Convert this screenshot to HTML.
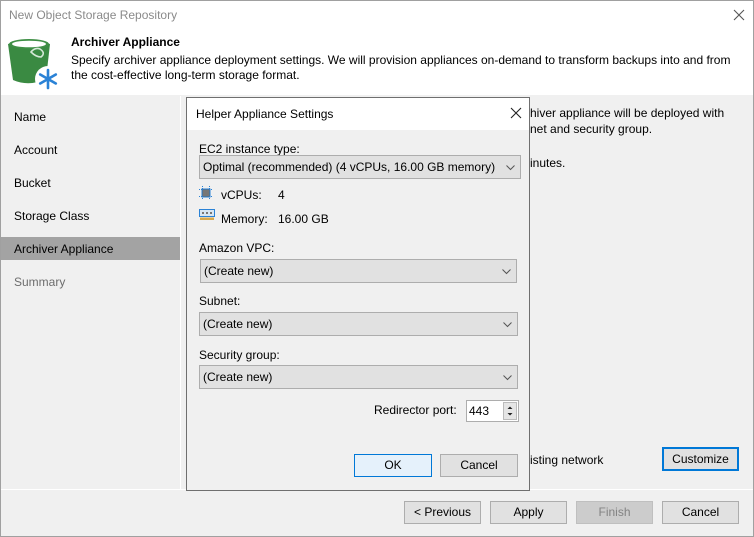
<!DOCTYPE html>
<html><head><meta charset="utf-8"><style>
*{box-sizing:border-box;margin:0;padding:0}
body{width:754px;height:537px;background:#f0f0f0;font-family:"Segoe UI","Liberation Sans",sans-serif;font-size:12px;color:#000;position:relative;overflow:hidden}
.abs{position:absolute}
.win{left:0;top:0;width:754px;height:537px;border:1px solid #a0a0a0;}
.hdr{left:1px;top:1px;width:752px;height:94px;background:#fff}
.t{white-space:nowrap}
.dd{position:absolute;background:#e1e1e1;border:1px solid #adadad;height:24px;padding:4px 0 0 3px}
.dd svg{position:absolute;right:5px;top:9px}
.btn{position:absolute;background:#e1e1e1;border:1px solid #adadad;height:23px;text-align:center;line-height:21px}
</style></head><body>
<div class="abs win"></div>
<div class="abs hdr"></div>
<div class="abs t" style="left:9px;top:8px;color:#8a8a8a;font-size:12px">New Object Storage Repository</div>
<svg class="abs" style="left:733px;top:9px" width="12" height="12"><path d="M1 1L11 11M11 1L1 11" stroke="#555" stroke-width="1.1"/></svg>
<svg class="abs" style="left:6px;top:35px" width="56" height="56" viewBox="0 0 56 56">
<path d="M2 9 Q23 2 44 9 L40 44 Q23 52 7 45Z" fill="#3a8a42"/>
<ellipse cx="23" cy="9" rx="20" ry="5" fill="#3f8f46"/>
<ellipse cx="23" cy="9" rx="17" ry="3.3" fill="#fff"/>
<path d="M25 17 Q29 12 34 14 Q40 18 35 22 Q30 22 25 17Z" fill="none" stroke="#d5e8d7" stroke-width="1.6"/>
<circle cx="42" cy="44" r="13" fill="#fff"/>
<g stroke="#2a82d6" stroke-width="2.6" stroke-linecap="round"><path d="M42 35V53M34.2 39.5L49.8 48.5M34.2 48.5L49.8 39.5"/></g>
</svg>
<div class="abs t" style="left:71px;top:35px;font-weight:bold;font-size:12px">Archiver Appliance</div>
<div class="abs" style="left:71px;top:53px;width:668px;line-height:15px">Specify archiver appliance deployment settings. We will provision appliances on-demand to transform backups into and from the cost-effective long-term storage format.</div>
<div class="abs" style="left:180px;top:96px;width:1px;height:393px;background:#fff"></div>
<div class="abs" style="left:1px;top:489px;width:752px;height:1px;background:#fff"></div>
<div class="abs t" style="left:14px;top:110px">Name</div>
<div class="abs t" style="left:14px;top:143px">Account</div>
<div class="abs t" style="left:14px;top:176px">Bucket</div>
<div class="abs t" style="left:14px;top:209px">Storage Class</div>
<div class="abs" style="left:1px;top:237px;width:179px;height:23px;background:#a3a3a3"></div>
<div class="abs t" style="left:14px;top:242px">Archiver Appliance</div>
<div class="abs t" style="left:14px;top:275px;color:#6d6d6d">Summary</div>
<div class="abs t" style="left:530px;top:106px">hiver appliance will be deployed with</div>
<div class="abs t" style="left:530px;top:122px">net and security group.</div>
<div class="abs t" style="left:530px;top:156px">inutes.</div>
<div class="abs t" style="left:530px;top:453px">isting network</div>
<div class="btn" style="left:662px;top:447px;width:77px;height:24px;border:2px solid #0078d7">Customize</div>
<div class="btn" style="left:404px;top:501px;width:77px">&lt; Previous</div>
<div class="btn" style="left:490px;top:501px;width:77px">Apply</div>
<div class="btn" style="left:576px;top:501px;width:77px;background:#cccccc;border-color:#bfbfbf;color:#838383">Finish</div>
<div class="btn" style="left:662px;top:501px;width:77px">Cancel</div>
<!-- dialog -->
<div class="abs" style="left:186px;top:97px;width:344px;height:394px;border:1px solid #6f6f6f;background:#f0f0f0"></div>
<div class="abs" style="left:187px;top:98px;width:342px;height:32px;background:#fff"></div>
<div class="abs t" style="left:196px;top:107px">Helper Appliance Settings</div>
<svg class="abs" style="left:510px;top:107px" width="12" height="12"><path d="M1 1L11 11M11 1L1 11" stroke="#222" stroke-width="1.1"/></svg>
<div class="abs t" style="left:199px;top:142px">EC2 instance type:</div>
<div class="dd" style="left:199px;top:155px;width:322px">Optimal (recommended) (4 vCPUs, 16.00 GB memory)<svg width="9" height="6"><path d="M0.5 0.5L4.5 4.5L8.5 0.5" fill="none" stroke="#555"/></svg></div>
<svg class="abs" style="left:199px;top:186px" width="14" height="14"><g stroke="#2a82d6" stroke-dasharray="1 1"><path d="M0 3.5H14M0 10.5H14M3.5 0V14M10.5 0V14"/></g><rect x="3" y="3" width="8" height="8" fill="#6a6a6a" stroke="#2a82d6"/><rect x="4" y="4" width="6" height="6" fill="#777"/></svg>
<div class="abs t" style="left:221px;top:188px">vCPUs:</div>
<div class="abs t" style="left:278px;top:188px">4</div>
<svg class="abs" style="left:199px;top:209px" width="16" height="12"><rect x="0.5" y="0.5" width="15" height="7" fill="#d8e6f2" stroke="#2a82d6"/><rect x="3" y="3" width="2" height="2" fill="#777"/><rect x="7" y="3" width="2" height="2" fill="#777"/><rect x="11" y="3" width="2" height="2" fill="#777"/><path d="M1 8.5H15V11H1Z" fill="#d9a84a"/></svg>
<div class="abs t" style="left:221px;top:212px">Memory:</div>
<div class="abs t" style="left:278px;top:212px">16.00 GB</div>
<div class="abs t" style="left:199px;top:241px">Amazon VPC:</div>
<div class="dd" style="left:200px;top:259px;width:317px">(Create new)<svg width="9" height="6"><path d="M0.5 0.5L4.5 4.5L8.5 0.5" fill="none" stroke="#555"/></svg></div>
<div class="abs t" style="left:199px;top:294px">Subnet:</div>
<div class="dd" style="left:199px;top:312px;width:319px">(Create new)<svg width="9" height="6"><path d="M0.5 0.5L4.5 4.5L8.5 0.5" fill="none" stroke="#555"/></svg></div>
<div class="abs t" style="left:199px;top:348px">Security group:</div>
<div class="dd" style="left:199px;top:365px;width:319px">(Create new)<svg width="9" height="6"><path d="M0.5 0.5L4.5 4.5L8.5 0.5" fill="none" stroke="#555"/></svg></div>
<div class="abs t" style="left:374px;top:403px">Redirector port:</div>
<div class="abs" style="left:466px;top:400px;width:53px;height:22px;background:#fff;border:1px solid #adadad;padding:3px 0 0 2px">443</div>
<div class="abs" style="left:503px;top:402px;width:14px;height:18px;background:#e5e5e5;border:1px solid #bbb"></div>
<svg class="abs" style="left:506px;top:404px" width="8" height="14"><path d="M1.5 5L4 2.5L6.5 5Z M1.5 9L4 11.5L6.5 9Z" fill="#222"/></svg>
<div class="btn" style="left:354px;top:454px;width:78px;background:#e5f1fb;border-color:#0078d7">OK</div>
<div class="btn" style="left:440px;top:454px;width:78px">Cancel</div>
</body></html>
